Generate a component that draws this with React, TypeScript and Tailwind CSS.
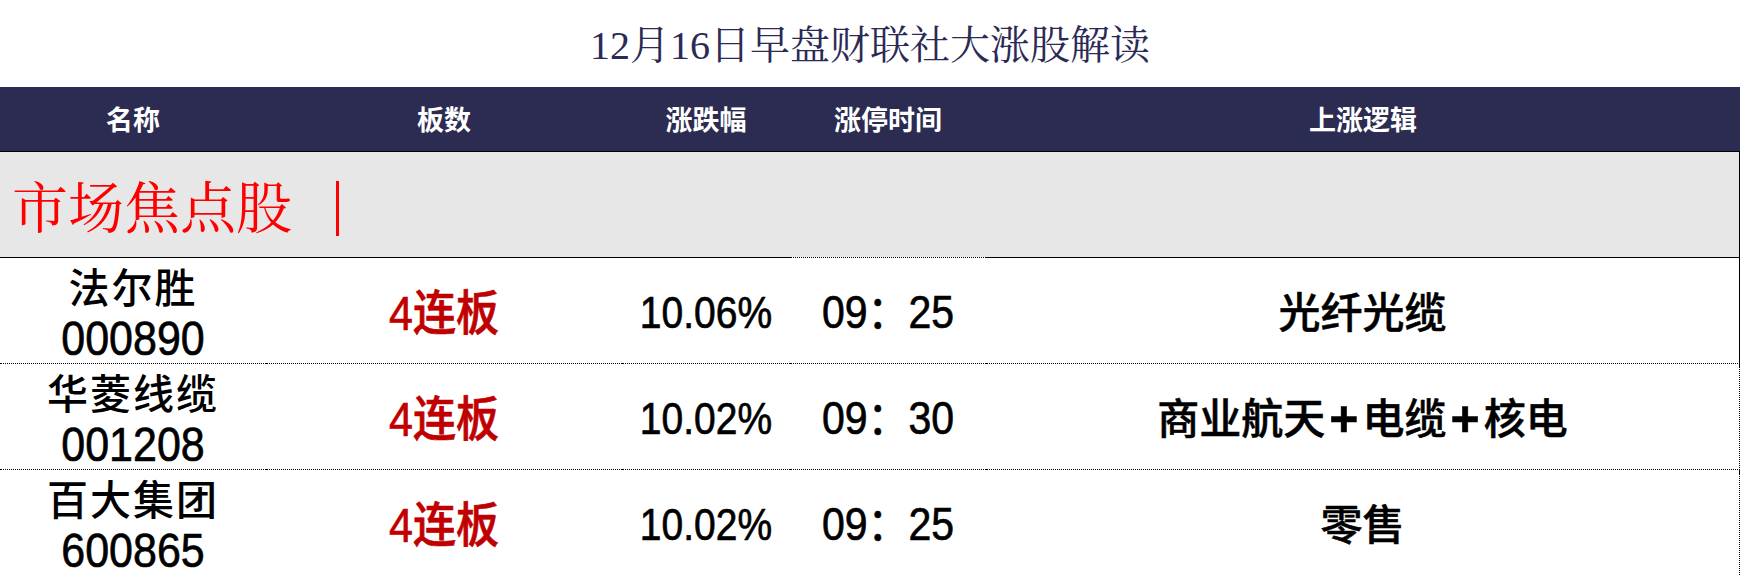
const rows = [
  { name: "法尔胜", code: "000890", board: "4连板", pct: "10.06%", time: "09：25", logic: "光纤光缆" },
  { name: "华菱线缆", code: "001208", board: "4连板", pct: "10.02%", time: "09：30", logic: "商业航天+电缆+核电" },
  { name: "百大集团", code: "600865", board: "4连板", pct: "10.02%", time: "09：25", logic: "零售" },
];

const cols = "grid grid-cols-[266px_356px_168px_196px_1fr]";

// the sheet stretches glyphs a little taller than the font draws them
const tall = "inline-block scale-y-[1.12] [-webkit-text-stroke:0.6px_currentColor]";

function Logic({ text }: { text: string }) {
  const parts = text.split("+");
  return (
    <span className="flex items-center">
      {parts.map((p, i) => (
        <span key={i} className="flex items-center">
          {i > 0 && <span className="mx-[4px] text-[50px] leading-none font-bold">+</span>}
          {p}
        </span>
      ))}
    </span>
  );
}

export default function App() {
  return (
    <div className="w-[1740px] h-[576px] overflow-hidden bg-white font-['Liberation_Sans','Noto_Sans_CJK_SC',sans-serif] text-black">
      <div className="h-[87px] flex items-center justify-center pt-1">
        <h1 className="text-[40px] leading-none text-[#2b2a55] font-['Liberation_Serif','Noto_Serif_CJK_SC','Noto_Sans_CJK_SC',serif]">
          12月16日早盘财联社大涨股解读
        </h1>
      </div>

      <div className={`${cols} h-[65px] bg-[#2c2b52] border-b border-black text-white text-[27px] font-bold font-['Noto_Sans_CJK_SC',sans-serif]`}>
        <div className="flex items-center justify-center">名称</div>
        <div className="flex items-center justify-center">板数</div>
        <div className="flex items-center justify-center">涨跌幅</div>
        <div className="flex items-center justify-center">涨停时间</div>
        <div className="flex items-center justify-center">上涨逻辑</div>
      </div>

      <div className="h-[105px] bg-[#e7e7e7] border-r border-black flex items-center pl-3 pt-2 text-[56px] leading-none text-[#ff0000] font-['Liberation_Serif','Noto_Serif_CJK_SC','Noto_Sans_CJK_SC',serif]">
        <span>市场焦点股</span>
        <span className="ml-[44px] inline-block w-[3px] h-[55px] bg-[#ff0000]" />
      </div>

      {rows.map((r, i) => {
        const top = i === 0 ? "border-t border-solid border-black" : "border-t border-dotted border-black";
        const last = i === rows.length - 1 ? "border-b border-black" : "";
        return (
          <div key={r.code} className={`${cols} ${i === rows.length - 1 ? "h-[107px]" : "h-[106px]"}`}>
            <div className={`${top} ${last} flex flex-col items-center justify-center pb-[4px]`}>
              <div className="text-[41px] leading-[54px] font-medium font-['Noto_Sans_CJK_SC',sans-serif] tracking-[2px]">{r.name}</div>
              <div className="text-[43px] leading-[52px]">
                <span className={tall}>{r.code}</span>
              </div>
            </div>
            <div className={`${top} ${last} flex items-center justify-center text-[43px] text-[#c00000] font-medium`}>
              <span className={tall}>{r.board}</span>
            </div>
            <div className={`${top} ${last} flex items-center justify-center text-[39px]`}>
              <span className={tall}>{r.pct}</span>
            </div>
            <div className={`${i === 0 ? "border-t border-dotted border-black" : top} ${last} flex items-center justify-center text-[41px]`}>
              <span className={tall}>{r.time}</span>
            </div>
            <div className={`${top} ${last} border-r border-black flex items-center justify-center text-[42px] font-medium [-webkit-text-stroke:0.5px_black]`}>
              <Logic text={r.logic} />
            </div>
          </div>
        );
      })}
    </div>
  );
}
